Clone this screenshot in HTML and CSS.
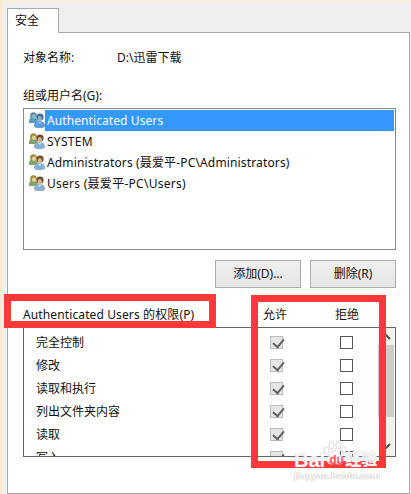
FILE: index.html
```
<!DOCTYPE html>
<html lang="zh-CN">
<head>
<meta charset="utf-8">
<title>安全</title>
<link rel="stylesheet" href="styles.css">
</head>
<body>
<svg width="0" height="0" class="defs">
  <symbol id="users" viewBox="0 0 16 16">
    <path d="M0 11c0-4 1-6 4-6s5 2 5 6z" fill="#7fa36c"/>
    <circle cx="4.500" cy="3.500" r="3.300" fill="#a08a3c"/>
    <ellipse cx="5" cy="4.700" rx="2" ry="2.300" fill="#ecd09a"/>
    <path d="M5 14.500c0-4 2-5.500 5.500-5.500S16 10.500 16 14.500c-1 2-10 2-11 0z" fill="#86afd2"/>
    <circle cx="11" cy="5" r="3.600" fill="#6b4a2e"/>
    <ellipse cx="10.800" cy="6.600" rx="2.100" ry="2.600" fill="#e0b68b"/>
    <path d="M9 10l2 2 1.500-2.500" fill="#e5eff7"/>
  </symbol>
  <symbol id="users-sel" viewBox="0 0 16 16">
    <path d="M0 11c0-4 1-6 4-6s5 2 5 6z" fill="#559bbe"/>
    <circle cx="4.500" cy="3.500" r="3.300" fill="#5d8da2"/>
    <ellipse cx="5" cy="4.700" rx="2" ry="2.300" fill="#8fb9cb"/>
    <path d="M5 14.500c0-4 2-5.500 5.500-5.500S16 10.500 16 14.500c-1 2-10 2-11 0z" fill="#5a9fdc"/>
    <circle cx="11" cy="5" r="3.600" fill="#446f98"/>
    <ellipse cx="10.800" cy="6.600" rx="2.100" ry="2.600" fill="#86add0"/>
    <path d="M9 10l2 2 1.500-2.500" fill="#a6cdef"/>
  </symbol>
</svg>
<div class="dialog">
  <div class="tab">安全</div>
  <main class="panel">
    <div class="object"><span class="label">对象名称:</span><span>D:\迅雷下载</span></div>
    <div class="caption">组或用户名(G):</div>
    <ul class="users">
      <li class="selected"><svg><use href="#users-sel"/></svg><span class="name">Authenticated Users</span></li>
      <li><svg><use href="#users"/></svg><span class="name wide">SYSTEM</span></li>
      <li><svg><use href="#users"/></svg><span class="name">Administrators (聂爱平-PC\Administrators)</span></li>
      <li><svg><use href="#users"/></svg><span class="name wide">Users (聂爱平-PC\Users)</span></li>
    </ul>
    <div class="buttons"><button>添加(D)...</button><button>删除(R)</button></div>
    <div class="perm-head"><span class="who">Authenticated Users 的权限(P)</span><span>允许</span><span>拒绝</span></div>
    <div class="perms">
      <div class="rows">
        <div class="row"><span>完全控制</span><i class="box on"></i><i class="box"></i></div>
        <div class="row"><span>修改</span><i class="box on"></i><i class="box"></i></div>
        <div class="row"><span>读取和执行</span><i class="box on"></i><i class="box"></i></div>
        <div class="row"><span>列出文件夹内容</span><i class="box on"></i><i class="box"></i></div>
        <div class="row"><span>读取</span><i class="box on"></i><i class="box"></i></div>
        <div class="row"><span>写入</span><i class="box on"></i><i class="box"></i></div>
      </div>
      <div class="scroll">
        <svg viewBox="0 0 16 17"><path d="M4 11l4-4 4 4"/></svg>
        <div class="thumb"></div>
        <svg viewBox="0 0 16 17"><path d="M4 6l4 4 4-4"/></svg>
      </div>
    </div>
  </main>
</div>
<div class="mark mark-title"></div>
<div class="mark mark-checks"></div>
<div class="watermark">
  <svg class="paw" viewBox="0 0 24 25"><ellipse cx="3.500" cy="10" rx="2.600" ry="3.600"/><ellipse cx="8.500" cy="4.500" rx="2.600" ry="3.800"/><ellipse cx="15.500" cy="4.500" rx="2.600" ry="3.800"/><ellipse cx="20.500" cy="10" rx="2.600" ry="3.600"/><path d="M12 10c-3 0-4 3-6 5s-3 3-2 6 4 3 8 2c4 1 7 1 8-2s0-4-2-6-3-5-6-5z"/></svg>
  <div class="brand"><b>Bai</b><small>du</small><b class="cn">经验</b></div>
  <div class="site">jingyan.baidu.com</div>
</div>
</body>
</html>
```
FILE: styles.css
```
* { box-sizing: border-box; }
body {
  margin: 0;
  width: 411px;
  height: 494px;
  overflow: hidden;
  background: #efefef;
  border-left: 2px solid #fde9c9;
  border-top: 2px solid #f9eddb;
  font: 12px/18px "Noto Sans", "Noto Sans CJK SC", sans-serif;
  color: #111;
}
.defs { position: absolute; }
.dialog { padding: 6px 1px 0 5px; }
.tab {
  position: relative;
  width: 52px;
  height: 25px;
  margin-bottom: -1px;
  padding: 3px 0 0 7px;
  background: #fff;
  border: 1px solid #a9a9a9;
  border-bottom: 0;
}
.panel {
  width: 403px;
  height: 462px;
  padding: 16px 13px 0 15px;
  background: #fff;
  border: 1px solid #a9a9a9;
}
.object { display: flex; height: 38px; }
.object .label { width: 94px; }
.caption { height: 21px; }
.users {
  width: 373px;
  height: 142px;
  margin: 0;
  padding: 1px 1px 0 5px;
  list-style: none;
  border: 1px solid #828790;
}
.users li { display: flex; height: 21px; }
.users svg { width: 16px; height: 16px; margin-top: 2px; }
.name { flex: 1; padding-left: 2px; line-height: 21px; letter-spacing: .15px; white-space: nowrap; }
.wide { letter-spacing: .27px; }
.selected .name { background: #3399ff; color: #fff; letter-spacing: .09px; }
.buttons { display: flex; justify-content: flex-end; gap: 9px; width: 373px; margin-top: 10px; }
button {
  width: 86px;
  height: 28px;
  padding: 0;
  font: inherit;
  color: #111;
  background: linear-gradient(#f0f0f0, #e5e5e5);
  border: 1px solid #acacac;
}
.perm-head { display: grid; grid-template-columns: 240px 72px 60px; height: 39px; padding-top: 18px; white-space: nowrap; }
.who { letter-spacing: .12px; }
.perms {
  display: flex;
  width: 373px;
  height: 130px;
  overflow: hidden;
  border: 1px solid #646464;
}
.rows { width: 354px; padding-top: 3px; }
.row { display: grid; grid-template-columns: 234px 70px 50px; align-items: center; height: 23px; padding-left: 12px; }
.box { position: relative; width: 13px; height: 13px; border: 1px solid #555; background: #fff; }
.box.on { border-color: #bcbcbc; background: #e6e6e6; }
.box.on::after {
  content: "";
  position: absolute;
  left: 3.500px;
  top: 0;
  width: 5px;
  height: 9px;
  border: solid #606060;
  border-width: 0 2px 2px 0;
  transform: translateY(-.5px) rotate(40deg);
}
.scroll { width: 16px; background: #f0f0f0; }
.scroll svg { display: block; width: 16px; height: 17px; fill: none; stroke: #505050; stroke-width: 2; }
.thumb { height: 72px; margin-bottom: 21px; background: #cdcdcd; }
.mark { position: absolute; border: 7px solid #fc3838; }
.mark-title { left: 4px; top: 294px; width: 212px; height: 34px; }
.mark-checks { left: 251px; top: 295px; width: 135px; height: 173px; }
.watermark {
  position: absolute;
  left: 294px;
  top: 440px;
  width: 90px;
  height: 44px;
  color: rgba(255, 255, 255, .85);
  text-shadow: 0 0 1px #b8b8b8;
  white-space: nowrap;
}
.paw { position: absolute; left: 29px; top: 0; width: 24px; height: 26px; fill: rgba(255, 255, 255, .8); stroke: #ccc; stroke-width: .7; }
.brand { position: relative; display: flex; align-items: center; height: 28px; padding-top: 12px; font: bold 20px/18px "Liberation Sans", "Noto Sans CJK SC", sans-serif; }
.brand small { width: 16px; margin-left: 4px; font-size: 12px; color: #fc5555; text-shadow: none; }
.brand .cn { font-size: 16px; }
.site { padding-top: 2px; font: bold 9.800px/12px "Liberation Sans", sans-serif; color: #fff; text-shadow: 0 0 1px #aaa, 0 0 1px #ccc; }
```
